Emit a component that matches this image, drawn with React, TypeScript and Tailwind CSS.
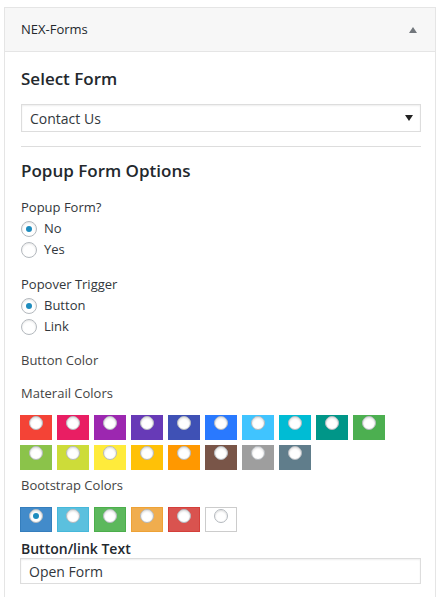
import React from 'react'

const material = [
  '#f44336', '#e91e63', '#9c27b0', '#673ab7', '#3f51b5', '#2979ff', '#40c4ff', '#00bcd4', '#009688', '#4caf50',
  '#8bc34a', '#cddc39', '#ffeb3b', '#ffc107', '#ff9800', '#795548', '#9e9e9e', '#607d8b',
]

const bootstrap = [
  { bg: '#428bca', border: '#357ebd' },
  { bg: '#5bc0de', border: '#46b8da' },
  { bg: '#5cb85c', border: '#4cae4c' },
  { bg: '#f0ad4e', border: '#eea236' },
  { bg: '#d9534f', border: '#d43f3a' },
  { bg: '#ffffff', border: '#cccccc' },
]

function Radio({ label, checked }: { label: string; checked?: boolean }) {
  return (
    <div className="flex items-center h-[21px]">
      <span className="w-4 h-4 rounded-full border border-[#b4b9be] bg-white shadow-[inset_0_1px_2px_rgba(0,0,0,0.1)] flex items-center justify-center">
        {checked && <span className="w-[6px] h-[6px] rounded-full bg-[#1e8cbe]" />}
      </span>
      <span className="ml-[7px] text-[13px] text-[#32373c]">{label}</span>
    </div>
  )
}

function Swatch({ bg, border, checked }: { bg: string; border?: string; checked?: boolean }) {
  return (
    <div
      className="w-8 h-[25px] flex justify-center pt-px"
      style={{ backgroundColor: bg, border: border ? `1px solid ${border}` : undefined }}
    >
      <span className="w-[14px] h-[14px] rounded-full bg-white border border-[#b4b9be] shadow-[inset_0_1px_2px_rgba(0,0,0,0.15)] flex items-center justify-center">
        {checked && <span className="w-[6px] h-[6px] rounded-full bg-[#1e8cbe]" />}
      </span>
    </div>
  )
}

export default function App() {
  return (
    <div className="bg-white min-h-[597px] pt-[7px] px-1 font-['Open_Sans',sans-serif] text-[#32373c]">
      <div className="border border-[#e5e5e5] border-b-0 min-h-[590px]">
        <div className="h-[44px] bg-[#f7f7f7] border-b border-[#e5e5e5] flex items-center justify-between pl-4 pr-[18px]">
          <span className="text-[13px] text-[#23282d]">NEX-Forms</span>
          <span className="w-0 h-0 border-l-[4px] border-r-[4px] border-b-[6px] border-l-transparent border-r-transparent border-b-[#72777c]" />
        </div>
        <div className="pl-4 pr-[14px] pt-[15px]">
          <h2 className="text-[17px] font-semibold leading-6 text-[#23282d]">Select Form</h2>
          <div className="mt-[13px] h-[28px] border border-[#ddd] shadow-[inset_0_1px_2px_rgba(0,0,0,0.07)] flex items-center justify-between pl-2 pr-[7px]">
            <span className="text-[14px] text-[#32373c]">Contact Us</span>
            <span className="w-0 h-0 border-l-[4px] border-r-[4px] border-t-[6px] border-l-transparent border-r-transparent border-t-[#222]" />
          </div>
          <div className="mt-[14px] border-t border-[#ddd]" />
          <h2 className="mt-3 text-[17px] font-semibold leading-6 text-[#23282d]">Popup Form Options</h2>
          <div className="mt-[14px] text-[13px] leading-5">Popup Form?</div>
          <div className="mt-px">
            <Radio label="No" checked />
            <Radio label="Yes" />
          </div>
          <div className="mt-[14px] text-[13px] leading-5">Popover Trigger</div>
          <div className="mt-px">
            <Radio label="Button" checked />
            <Radio label="Link" />
          </div>
          <div className="mt-[13px] text-[13px] leading-5 text-[#444]">Button Color</div>
          <div className="mt-[13px] text-[13px] leading-5 text-[#444]">Materail Colors</div>
          <div className="mt-3 ml-[-1px] flex flex-wrap gap-x-[5px] gap-y-[5px] w-[370px]">
            {material.map((c) => (
              <Swatch key={c} bg={c} />
            ))}
          </div>
          <div className="mt-[5px] text-[13px] leading-5 text-[#444]">Bootstrap Colors</div>
          <div className="mt-3 ml-[-1px] flex gap-[5px]">
            {bootstrap.map((b, i) => (
              <Swatch key={b.bg} bg={b.bg} border={b.border} checked={i === 0} />
            ))}
          </div>
          <div className="mt-2 text-[14px] font-semibold leading-[18px] text-[#23282d]">Button/link Text</div>
          <div className="ml-[-1px] h-[26px] border border-[#ddd] shadow-[inset_0_1px_2px_rgba(0,0,0,0.07)] flex items-center pl-2">
            <span className="text-[14px] text-[#32373c]">Open Form</span>
          </div>
        </div>
      </div>
    </div>
  )
}
